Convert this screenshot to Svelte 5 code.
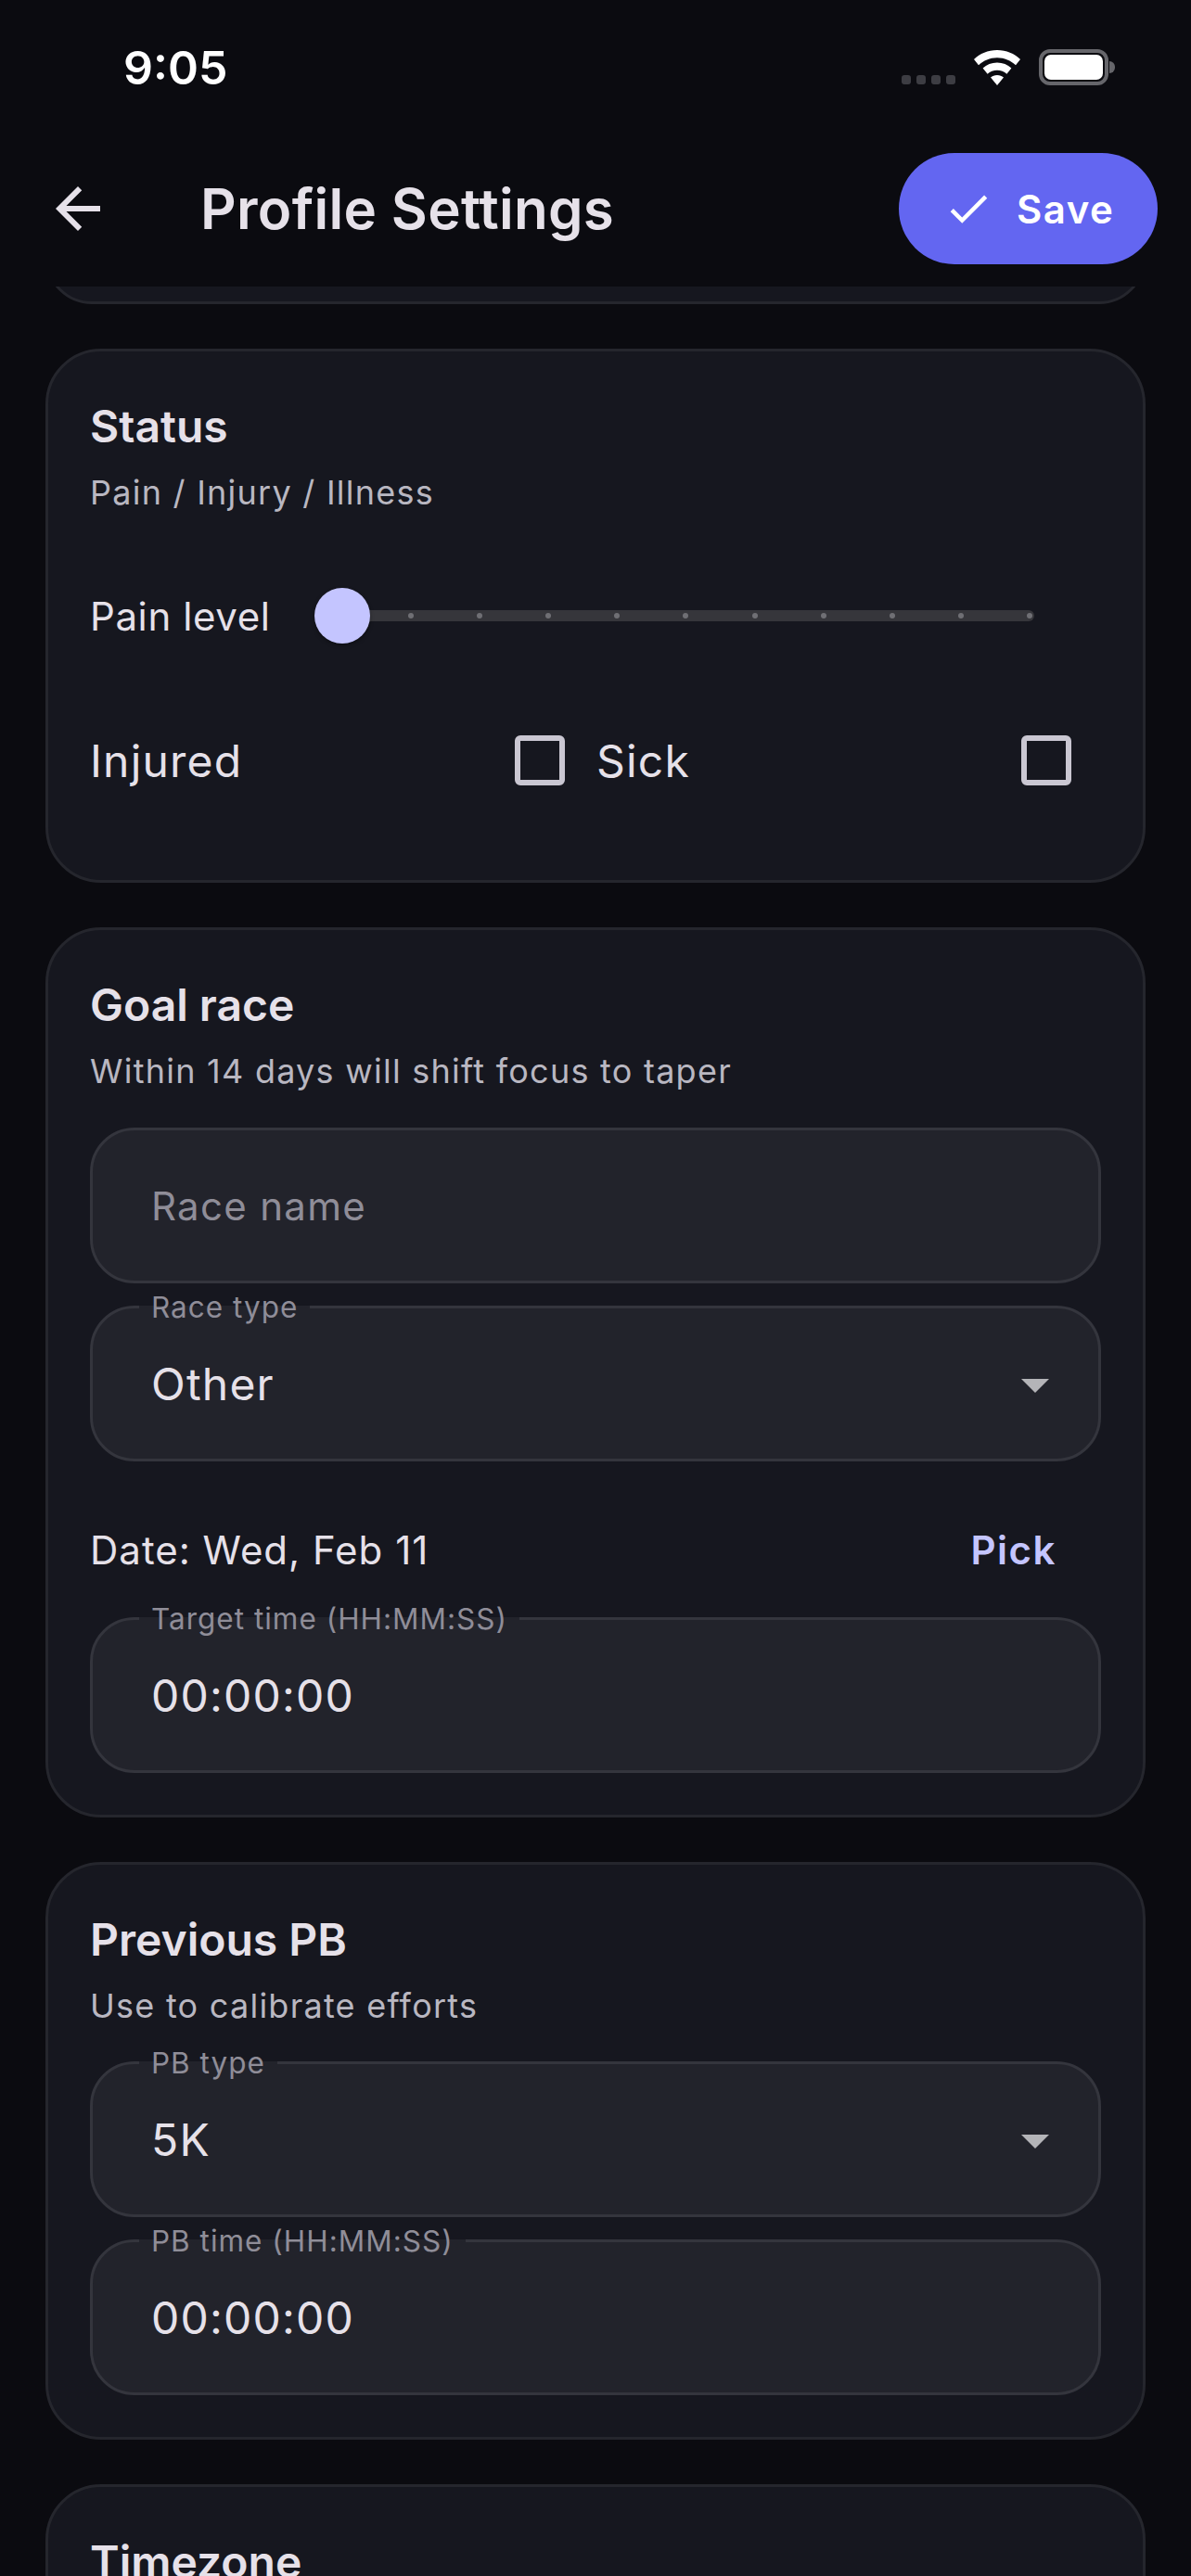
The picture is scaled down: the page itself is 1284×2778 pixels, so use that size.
<script>
  const ticks = Array.from({ length: 10 }, (_, i) => i);
</script>

{#snippet field(label, value, kind)}
  <div class="field">
    {#if label}<span class="float">{label}</span>{/if}
    <span class={kind === 'placeholder' ? 'value placeholder' : 'value'}>{value}</span>
    {#if kind === 'select'}<span class="caret"></span>{/if}
  </div>
{/snippet}

<div class="screen">
  <div class="status">
    <span class="clock">9:05</span>
    <div class="indicators">
      <div class="signal"><i></i><i></i><i></i><i></i></div>
      <svg class="wifi" width="52" height="38" viewBox="0 0 52 38">
        <path d="M26 0C16 0 7.500 3.800 1 10l5 6.300C11.300 11.300 18.200 8.200 26 8.200s14.700 3.100 20 8.100l5-6.300C44.500 3.800 36 0 26 0z" fill="#fff"/>
        <path d="M26 13.500c-6 0-11.300 2.300-15.400 6l5 6.200c2.800-2.500 6.400-4 10.400-4s7.600 1.500 10.400 4l5-6.200c-4.100-3.700-9.400-6-15.400-6z" fill="#fff"/>
        <path d="M26 27c-2.700 0-5.200 1-7 2.600L26 38l7-8.400C31.200 28 28.700 27 26 27z" fill="#fff"/>
      </svg>
      <div class="battery"><div class="cell"></div></div>
    </div>
  </div>

  <header class="bar">
    <svg class="back" width="72" height="72" viewBox="0 0 24 24"><path d="M20 11H7.830l5.590-5.590L12 4l-8 8 8 8 1.410-1.410L7.830 13H20v-2z" fill="#e6e1e9"/></svg>
    <h1>Profile Settings</h1>
    <div class="save">
      <svg width="54" height="54" viewBox="0 0 24 24"><path d="M9 16.170L4.830 12l-1.420 1.410L9 19 21 7l-1.410-1.410z" fill="#fff"/></svg>
      <span>Save</span>
    </div>
  </header>

  <main>
    <section class="card stub"></section>

    <section class="card status-card">
      <h2>Status</h2>
      <p class="sub">Pain / Injury / Illness</p>
      <div class="slider-row">
        <span class="slider-label">Pain level</span>
        <div class="slider">
          <div class="track">
            {#each ticks as t}<i class="tick" style="left:{t * 74.1 + 71}px"></i>{/each}
          </div>
          <div class="thumb"></div>
        </div>
      </div>
      <div class="checks">
        <div class="check"><span>Injured</span><i class="box"></i></div>
        <div class="check"><span>Sick</span><i class="box"></i></div>
      </div>
    </section>

    <section class="card">
      <h2>Goal race</h2>
      <p class="sub">Within 14 days will shift focus to taper</p>
      <div class="fields first">
        {@render field('', 'Race name', 'placeholder')}
        {@render field('Race type', 'Other', 'select')}
      </div>
      <div class="date">
        <span>Date: Wed, Feb 11</span>
        <span class="pick">Pick</span>
      </div>
      {@render field('Target time (HH:MM:SS)', '00:00:00', 'text')}
    </section>

    <section class="card">
      <h2>Previous PB</h2>
      <p class="sub">Use to calibrate efforts</p>
      <div class="fields second">
        {@render field('PB type', '5K', 'select')}
        {@render field('PB time (HH:MM:SS)', '00:00:00', 'text')}
      </div>
    </section>

    <section class="card">
      <h2>Timezone</h2>
    </section>
  </main>
</div>

<style>
  :global(body) { margin: 0; background: #0b0b10; }
  .screen {
    width: 1284px; height: 2778px; overflow: hidden; background: #0b0b10;
    font-family: Inter, "Noto Sans", sans-serif; color: #e6e1e9;
    display: flex; flex-direction: column;
  }
  .status {
    height: 145px; flex: none; display: flex; justify-content: space-between;
    padding: 0 89px 0 133px; box-sizing: border-box;
  }
  .clock { font-size: 50px; font-weight: 600; color: #fff; line-height: 62px; margin-top: 42px; }
  .indicators { display: flex; align-items: flex-start; padding-top: 53px; }
  .signal { display: flex; gap: 6px; margin-top: 28px; margin-right: 19px; }
  .signal i { width: 10px; height: 10px; border-radius: 3px; background: #3d3d43; display: block; }
  .wifi { margin-right: 19px; margin-top: 1px; }
  .battery {
    position: relative; width: 75px; height: 39px; box-sizing: border-box; border: 4px solid #66666b;
    border-radius: 12px; padding: 2px;
  }
  .battery::after {
    content: ""; position: absolute; right: -11px; top: 9px; width: 6px; height: 13px;
    background: #66666b; border-radius: 0 6px 6px 0;
  }
  .cell { width: 100%; height: 100%; background: #fff; border-radius: 7px; }
  .bar {
    height: 164px; flex: none; box-sizing: border-box; display: flex; align-items: flex-start;
    padding: 20px 36px 0 48px; position: relative; z-index: 1; background: #0b0b10;
  }
  .back { margin-top: 24px; }
  h1 { margin: 0 0 0 96px; font-size: 60px; font-weight: 600; line-height: 80px; color: #e6e1e9; padding-top: 20px; letter-spacing: .3px; }
  .save {
    margin-left: auto; height: 120px; width: 279px; border-radius: 60px; background: #6366f1;
    display: flex; align-items: center; gap: 25px; padding-left: 48px; box-sizing: border-box; color: #fff;
    font-size: 42px; font-weight: 600; letter-spacing: 1.5px;
  }
  .save svg { flex: none; }
  main { display: flex; flex-direction: column; gap: 48px; padding: 0 49px; }
  .card {
    background: #16171f; border: 3px solid #25262d; border-radius: 60px; padding: 45px 45px 45px;
    flex: none;
  }
  .stub { height: 100px; margin-top: -81px; box-sizing: border-box; padding: 0; }
  .status-card { padding-bottom: 0; height: 576px; box-sizing: border-box; }
  h2 { margin: 0; font-size: 48px; font-weight: 600; line-height: 72px; color: #e6e1e9; }
  .sub { margin: 8px 0 0; font-size: 36px; line-height: 54px; letter-spacing: 1.25px; color: #b9b7c1; }
  .slider-row { display: flex; align-items: center; margin-top: 70px; height: 72px; }
  .slider-label { font-size: 42px; letter-spacing: .6px; width: 242px; flex: none; color: #e6e1e9; }
  .slider { position: relative; width: 776px; height: 60px; flex: none; }
  .track { position: absolute; left: 30px; right: 0; top: 24px; height: 12px; background: #36363b; border-radius: 0 6px 6px 0; }
  .tick { position: absolute; top: 3px; width: 6px; height: 6px; border-radius: 50%; background: #6f6f74; }
  .thumb { position: absolute; left: 0; top: 0; width: 60px; height: 60px; border-radius: 50%; background: #c4c5ff; box-shadow: 0 2px 4px rgba(0,0,0,.35); }
  .checks { display: flex; margin-top: 93px; }
  .check { display: flex; align-items: center; justify-content: space-between; flex: none; height: 54px; font-size: 48px; letter-spacing: 1.2px; }
  .check:first-child { width: 512px; margin-right: 34px; }
  .check:last-child { width: 512px; }
  .box { width: 54px; height: 54px; box-sizing: border-box; border: 6px solid #cac7d2; border-radius: 6px; display: block; }
  .fields { display: flex; flex-direction: column; gap: 24px; }
  .fields.first { margin-top: 34px; }
  .fields.second { margin-top: 33px; }
  .field {
    position: relative; height: 168px; box-sizing: border-box; background: #22232b; border: 3px solid #34353d;
    border-radius: 48px; display: flex; align-items: center; justify-content: space-between;
    padding: 0 42px 0 63px;
  }
  .value { font-size: 48px; letter-spacing: 1.2px; color: #e6e1e9; }
  .placeholder { color: #8f8d98; font-size: 42px; letter-spacing: 1.3px; }
  .float {
    position: absolute; left: 50px; top: -19px; padding: 0 13px; font-size: 31.5px; line-height: 36px;
    letter-spacing: 1px; color: #8f8d98; white-space: nowrap;
    background: linear-gradient(#16171f 45%, #22232b 45%);
  }
  .caret { width: 0; height: 0; border-left: 15px solid transparent; border-right: 15px solid transparent; border-top: 15px solid #b4b4b8; margin-right: 11px; margin-top: 4px; }
  .date {
    display: flex; justify-content: space-between; align-items: center; height: 60px; margin-top: 65px; margin-bottom: 43px;
    font-size: 42px; letter-spacing: 1px; padding-right: 48px;
  }
  .pick { color: #c4c5ff; font-weight: 600; letter-spacing: 1.5px; }
</style>
